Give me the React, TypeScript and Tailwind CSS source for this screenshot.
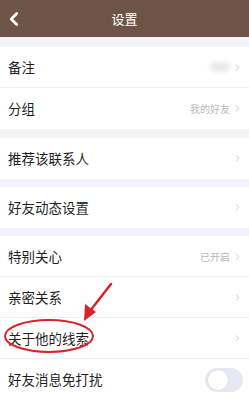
import { ChevronLeft, ChevronRight } from "lucide-react";

type Row = { label: string; value?: string; blur?: boolean; toggle?: boolean };

const groups: Row[][] = [
  [{ label: "备注", blur: true }, { label: "分组", value: "我的好友" }],
  [{ label: "推荐该联系人" }],
  [{ label: "好友动态设置" }],
  [
    { label: "特别关心", value: "已开启" },
    { label: "亲密关系" },
    { label: "关于他的线索" },
    { label: "好友消息免打扰", toggle: true },
  ],
];

const gaps = ["h-[10px]", "h-[9px]", "h-[8px]", "h-[8px]"];

function SettingRow({ row, last }: { row: Row; last: boolean }) {
  return (
    <div className={`h-[41px] flex items-center pl-2 pr-[6px] bg-white ${last ? "" : "border-b border-[#eeeff2]"}`}>
      <span className="flex-1 text-[13.5px] text-[#1f1f1f]">{row.label}</span>
      {row.toggle ? (
        <div className="w-[38px] h-[24px] rounded-full bg-[#e6e9f1] p-[2px] flex items-center">
          <div className="w-[22px] h-[22px] rounded-full bg-white border border-[#dcdfe6]" />
        </div>
      ) : (
        <div className="flex items-center gap-[2px]">
          {row.value && <span className="text-[10px] text-[#b8b8b8]">{row.value}</span>}
          {row.blur && <span className="w-[20px] h-[10px] rounded-full bg-[#e9e9e9] blur-[2px]" />}
          <ChevronRight className="w-[11px] h-[11px] text-[#c4c4c4]" strokeWidth={2} />
        </div>
      )}
    </div>
  );
}

export default function App() {
  return (
    <div
      className="relative w-[249px] h-[399px] overflow-hidden bg-[#f2f3f7]"
      style={{ fontFamily: '"Noto Sans CJK SC", "Noto Sans", sans-serif' }}
    >
      {/* Header */}
      <div className="h-[37px] bg-[#6d5447] flex items-center relative">
        <ChevronLeft className="absolute left-[3px] w-[22px] h-[22px] text-white" strokeWidth={3} />
        <span className="flex-1 text-center text-[13px] text-white">设置</span>
      </div>

      {groups.map((g, gi) => (
        <div key={gi}>
          <div className={gaps[gi]} />
          {g.map((row, ri) => (
            <SettingRow key={row.label} row={row} last={ri === g.length - 1} />
          ))}
        </div>
      ))}

      {/* Red annotation */}
      <svg className="absolute left-0 top-0 pointer-events-none" width="249" height="399">
        <ellipse cx="49" cy="336" rx="44" ry="16" fill="none" stroke="#d8232b" strokeWidth="2" />
        <line x1="111" y1="284" x2="90" y2="311" stroke="#d8232b" strokeWidth="2.5" strokeLinecap="round" />
        <polygon points="84,321 85,304 96,312" fill="#d8232b" />
      </svg>
    </div>
  );
}
